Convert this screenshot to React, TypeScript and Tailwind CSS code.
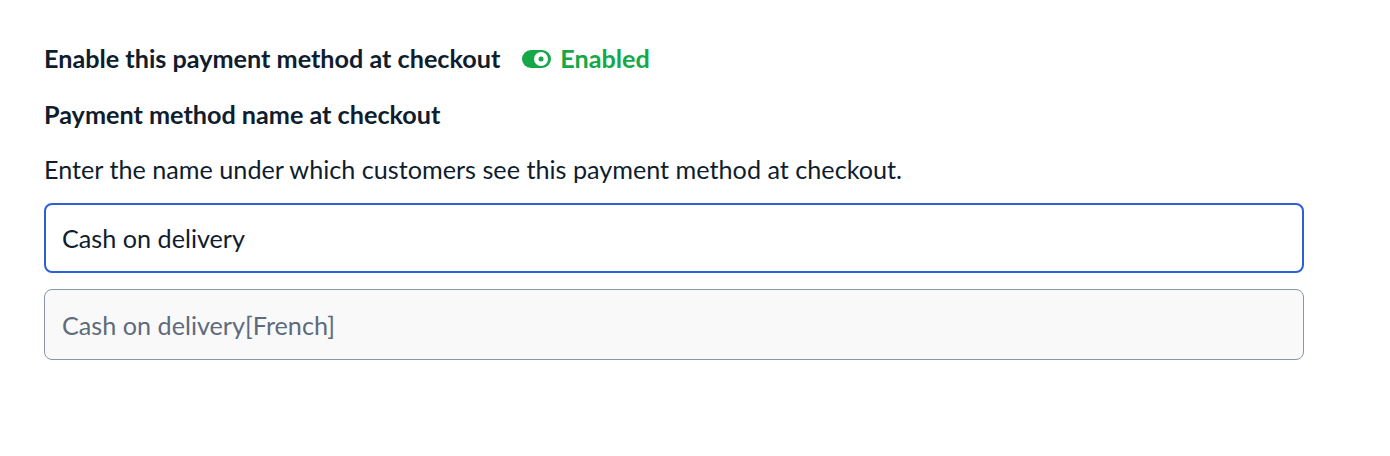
export default function App() {
  return (
    <div className="min-h-screen bg-white font-['Lato','Liberation_Sans',sans-serif] text-[#0f1d2e]">
      <div className="pl-[44px] pt-[44px] w-[1304px]">
        {/* Enable toggle row */}
        <div className="flex items-center h-[30px]">
          <span className="text-[25.2px] font-bold">Enable this payment method at checkout</span>
          <span className="ml-[22px] flex items-center gap-[9px] text-[25.2px] font-bold text-[#14a849]">
            <svg width="29" height="18" viewBox="0 0 29 18">
              <rect x="0" y="0" width="29" height="18" rx="9" fill="#14a849" />
              <circle cx="19" cy="9" r="7" fill="#ffffff" />
              <circle cx="19" cy="9" r="2.5" fill="#14a849" />
            </svg>
            Enabled
          </span>
        </div>

        <h3 className="mt-[25px] text-[25.2px] font-bold leading-[30px]">Payment method name at checkout</h3>

        <p className="mt-[25px] text-[25.2px] leading-[30px]">
          Enter the name under which customers see this payment method at checkout.
        </p>

        <div className="mt-[19px] flex flex-col gap-[16px]">
          <input
            defaultValue="Cash on delivery"
            className="h-[70px] w-full rounded-[8px] border-2 border-[#2d5fd8] bg-white px-[16px] text-[25.2px] text-[#0f1d2e] outline-none"
          />
          <input
            defaultValue="Cash on delivery[French]"
            readOnly
            className="h-[71px] w-full rounded-[8px] border border-[#8a95a5] bg-[#f9f9f9] px-[17px] text-[25.2px] text-[#5e6b7c] outline-none"
          />
        </div>
      </div>
    </div>
  );
}
